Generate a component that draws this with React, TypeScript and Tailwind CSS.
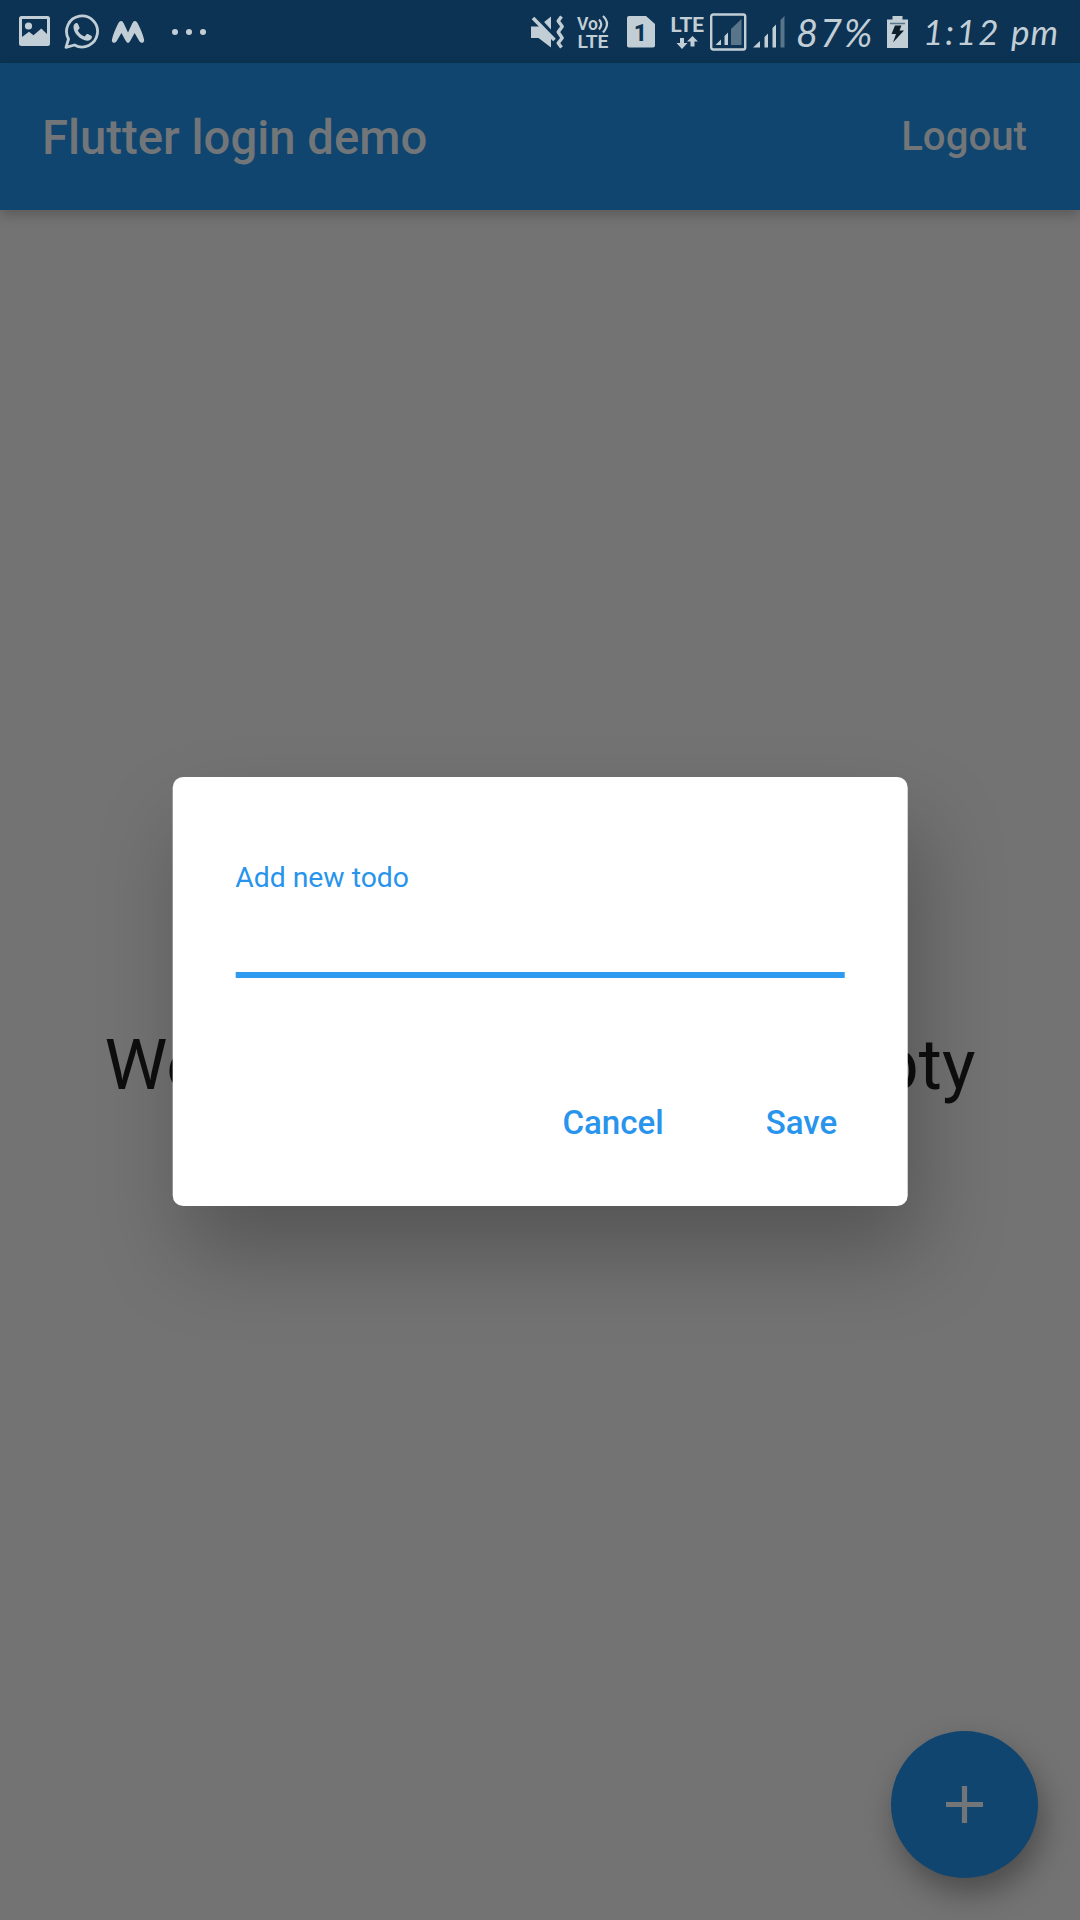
import React from "react";

const ICON = "#c2ced6";

function NotificationIcons() {
  return (
    <div className="flex items-center">
      <svg className="h-[31px] w-[31px]" viewBox="0 0 31 31" fill={ICON}>
        <path
          fillRule="evenodd"
          d="M2.5 0h26A2.5 2.5 0 0 1 31 2.5v25a2.5 2.5 0 0 1-2.5 2.5h-26A2.5 2.5 0 0 1 0 27.500v-25A2.500 2.500 0 0 1 2.500 0ZM3 3v18l7-5.200 4.500 3.400 7.800-6.700L28 18V3Z"
        />
        <circle cx="9.500" cy="10" r="3.600" />
      </svg>
      <svg className="ml-[14px] h-[36px] w-[36px]" viewBox="0 0 36 36" fill="none">
        <path
          d="M2 33.300 4.500 25A15.500 15.500 0 1 1 10.500 31Z"
          stroke={ICON}
          strokeWidth="2.800"
          strokeLinejoin="round"
        />
        <path
          d="M9.500 12.500c.2-1.800 1.300-3.300 2.600-3.500 1-.1 1.500.2 1.900 1l1.400 3.200c.3.800.1 1.200-.4 1.800l-1.300 1.500c1.600 2.900 3.900 4.800 6.900 6l1.800-2.100c.5-.6.900-.6 1.500-.3l3.300 1.600c.7.400.8.700.7 1.500-.3 2.100-2.300 3.500-4.500 3.600-3 .1-7-2-10-5.200-2.600-2.800-4.200-6.300-3.900-9.100Z"
          fill={ICON}
        />
      </svg>
      <svg className="ml-[11px] h-[22px] w-[34px]" viewBox="0 0 34 22" fill={ICON}>
        <path d="M10 0C11.200 0 12 .8 12.800 2.500L17 11.500 21.200 2.500C22 .8 22.800 0 24 0c1.200 0 2 .9 2.800 2.500C29.800 8.500 31.800 13 33 18.300c.5 2.300-.4 3.500-1.900 3.500-1.300 0-2-.5-3-2L23.600 12 19.500 19.500C18.500 21.200 18 21.800 17 21.800s-1.500-.6-2.500-2.300L10.400 12 5.900 19.800c-1 1.500-1.700 2-3 2C1.400 21.800.5 20.600 1 18.300 2.200 13 4.200 8.500 7.200 2.500 8 .9 8.800 0 10 0Z" />
      </svg>
      <div className="ml-[27px] flex gap-[8px]">
        <span className="size-[6px] rounded-full bg-[#c2ced6]" />
        <span className="size-[6px] rounded-full bg-[#c2ced6]" />
        <span className="size-[6px] rounded-full bg-[#c2ced6]" />
      </div>
    </div>
  );
}

function SystemIcons() {
  return (
    <div className="flex items-center text-[#c2ced6]">
      <svg className="h-[40px] w-[36px]" viewBox="0 0 36 40">
        <path d="M1 14.500h7.500L21 4.500v31L8.500 26H1Z" fill={ICON} />
        <path d="M5 3 28 28" stroke="#0c3353" strokeWidth="4" />
        <path d="M3 6 24.500 28" stroke={ICON} strokeWidth="3.600" />
        <path
          d="M31.500 4.500 28.200 9l4 5.500-4 5.500 4 6-4 5 3.300 4.500"
          stroke={ICON}
          strokeWidth="3.400"
          strokeLinejoin="round"
          fill="none"
        />
      </svg>
      <svg className="ml-[10px] h-[40px] w-[34px]" viewBox="0 0 34 40">
        <g fill={ICON} fontFamily="Roboto, sans-serif" fontWeight="600">
          <text x="1" y="17.500" fontSize="17.500" textLength="21" lengthAdjust="spacingAndGlyphs">Vo</text>
          <text x="1.500" y="36" fontSize="18" textLength="31" lengthAdjust="spacingAndGlyphs">LTE</text>
        </g>
        <path d="M23 7.500q4.500 4.500 0 10M27 4q8 7.500 0 16.500" stroke={ICON} strokeWidth="2.200" fill="none" />
      </svg>
      <svg className="ml-[17px] h-[32px] w-[28px]" viewBox="0 0 28 32">
        <path d="M2 0h17l9 8v21.500a2 2 0 0 1-2 2H2a2 2 0 0 1-2-2V2a2 2 0 0 1 2-2Z" fill={ICON} />
        <text x="13.500" y="25" textAnchor="middle" fontFamily="Roboto, sans-serif" fontWeight="800" fontSize="23" fill="#0c3353">1</text>
      </svg>
      <svg className="ml-[15px] h-[40px] w-[35px]" viewBox="0 0 35 40">
        <text x="0.500" y="19.500" fontFamily="Roboto, sans-serif" fontWeight="700" fontSize="20.500" textLength="33.500" lengthAdjust="spacingAndGlyphs" fill={ICON}>LTE</text>
        <path d="M10 26h4v5h3.500L12 37l-5.500-6H10ZM20.500 34.500h4v-5h3.500L22.500 24 17 29.500h3.500Z" fill={ICON} />
      </svg>
      <svg className="ml-[5px] h-[38px] w-[37px]" viewBox="0 0 37 38">
        <rect x="1.200" y="1.500" width="34" height="35" rx="2" fill="none" stroke={ICON} strokeWidth="2.400" />
        <path d="M5.500 32 11 26.500V32ZM14.500 23l3.500-3.500V32h-3.500Z" fill={ICON} />
        <path d="M21 16 31.500 6v26H21Z" fill="#59758a" />
      </svg>
      <svg className="ml-[6px] h-[32px] w-[33px]" viewBox="0 0 33 32">
        <path d="M0 31.500 7 25v6.500ZM11.500 21 15 17.500v14h-3.500ZM19.500 12 23 8.500v23h-3.500Z" fill={ICON} />
        <path d="M27.500 4 31.500 0v31.500h-4Z" fill="#59758a" />
      </svg>
    </div>
  );
}

function StatusBar() {
  return (
    <div className="flex h-[63px] items-center justify-between bg-[#0c3353] pr-[21px] pl-[19px]">
      <NotificationIcons />
      <div className="flex items-center">
        <SystemIcons />
        <span className="ml-[10px] block w-[80px] font-['Lato'] text-[38px] leading-[44px] tracking-[2px] whitespace-nowrap text-[#c2ced6] italic">
          87%
        </span>
        <svg className="ml-[11px] h-[32px] w-[21px]" viewBox="0 0 21 32">
          <path d="M5.500 0h10v3.500H21V32H0V3.500h5.500Z" fill={ICON} />
          <path d="M3 7.500h15" stroke="#59758a" strokeWidth="1.500" />
          <path d="M8 9.500h6.500l-2 5H17L6 26.500l3-8.500H4.500Z" fill="#0e1f2c" />
        </svg>
        <span className="ml-[15px] flex w-[136px] justify-between pb-[2px] font-['Lato'] text-[35px] leading-[44px] whitespace-nowrap text-[#c2ced6] italic">
          <span className="tracking-[2px]">1:12</span>
          <span className="tracking-[1px]">pm</span>
        </span>
      </div>
    </div>
  );
}

function AppBar() {
  return (
    <header className="z-10 flex h-[147px] items-center justify-between bg-[#104570] pr-[53px] pl-[42px] font-medium text-[#737678] shadow-[0_5px_12px_rgba(0,0,0,0.22)]">
      <h1 className="pt-[2px] text-[47.250px] leading-[56px]">Flutter login demo</h1>
      <button className="pt-[1px] text-[40.200px] leading-[48px]">Logout</button>
    </header>
  );
}

function AddTodoDialog() {
  return (
    <div className="absolute inset-x-0 top-[63px] bottom-0 flex items-center justify-center">
      <div className="flex h-[429px] w-[735px] -translate-x-[0.300px] flex-col rounded-[10.500px] bg-white px-[63px] text-[#2894ec] shadow-[12px_48px_85px_rgba(0,0,0,0.26)]">
        <label className="mt-[84px] text-[28.350px] leading-[34px]">Add new todo</label>
        <div className="mt-[34px] h-[49px] border-b-[6px] border-[#2f9bf0]" />
        <div className="mt-[123px] flex justify-end gap-[102px] pr-[7px] text-[33.100px] leading-[44px] font-medium">
          <button>Cancel</button>
          <button>Save</button>
        </div>
      </div>
    </div>
  );
}

export default function App() {
  return (
    <div className="relative flex h-[1920px] w-[1080px] flex-col overflow-hidden bg-[#737373] font-['Roboto',sans-serif]">
      <StatusBar />
      <AppBar />
      <main className="flex flex-1 items-center justify-center">
        <p className="text-[70.900px] leading-[84px] whitespace-nowrap text-[#0e0e0e]">
          Welcome. Your list is empty
        </p>
      </main>
      <button className="absolute right-[42px] bottom-[42px] flex size-[147px] items-center justify-center rounded-full bg-[#104570] shadow-[5px_15px_30px_rgba(0,0,0,0.34)]">
        <svg className="size-[37px]" viewBox="0 0 37 37" stroke="#737678" strokeWidth="5.200">
          <path d="M18.500 0v37M0 18.500h37" />
        </svg>
      </button>
      <AddTodoDialog />
    </div>
  );
}
